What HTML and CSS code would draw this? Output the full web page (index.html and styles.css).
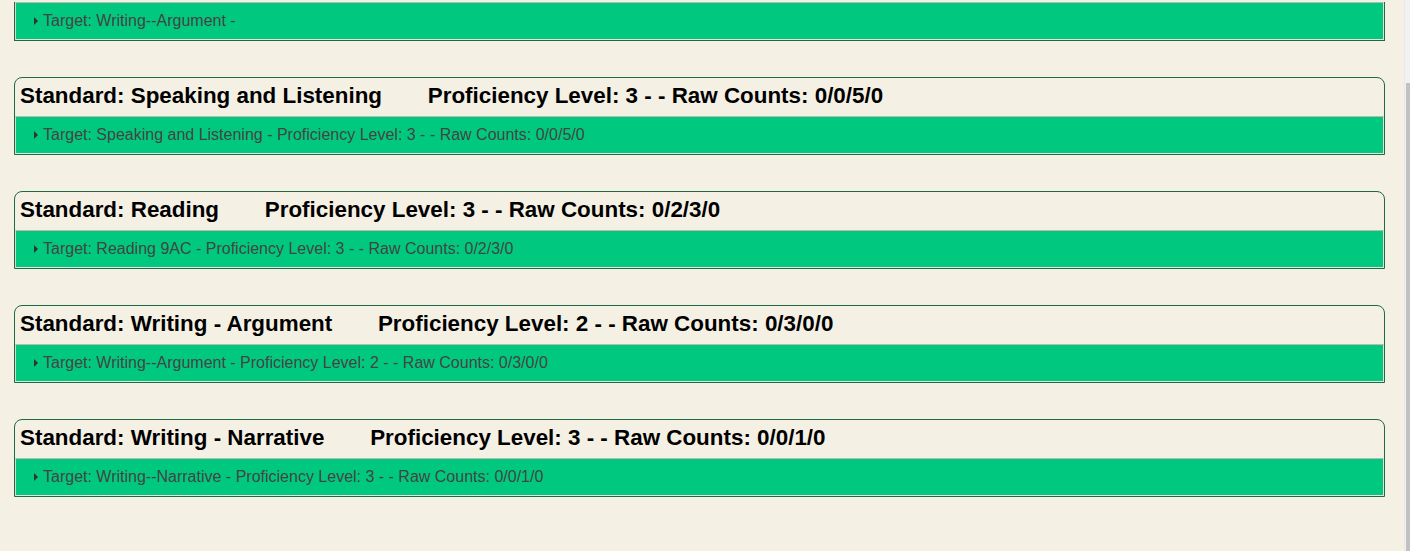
FILE: index.html
```html
<!DOCTYPE html>
<html lang="en">
<head>
<meta charset="utf-8">
<title>Standards Report</title>
<link rel="stylesheet" href="styles.css">
</head>
<body>
<div class="page">
  <div class="card card-first">
    <div class="target"><span class="marker"></span>Target: Writing--Argument -</div>
  </div>
  <div class="card">
    <div class="card-head">Standard: Speaking and Listening <span class="prof">Proficiency Level: 3 - - Raw Counts: 0/0/5/0</span></div>
    <div class="target"><span class="marker"></span>Target: Speaking and Listening - Proficiency Level: 3 - - Raw Counts: 0/0/5/0</div>
  </div>
  <div class="card">
    <div class="card-head">Standard: Reading <span class="prof">Proficiency Level: 3 - - Raw Counts: 0/2/3/0</span></div>
    <div class="target"><span class="marker"></span>Target: Reading 9AC - Proficiency Level: 3 - - Raw Counts: 0/2/3/0</div>
  </div>
  <div class="card">
    <div class="card-head">Standard: Writing - Argument <span class="prof">Proficiency Level: 2 - - Raw Counts: 0/3/0/0</span></div>
    <div class="target"><span class="marker"></span>Target: Writing--Argument - Proficiency Level: 2 - - Raw Counts: 0/3/0/0</div>
  </div>
  <div class="card">
    <div class="card-head">Standard: Writing - Narrative <span class="prof">Proficiency Level: 3 - - Raw Counts: 0/0/1/0</span></div>
    <div class="target"><span class="marker"></span>Target: Writing--Narrative - Proficiency Level: 3 - - Raw Counts: 0/0/1/0</div>
  </div>
</div>
<div class="scrollbar"><div class="thumb"></div></div>
</body>
</html>
```
FILE: styles.css
```css
html, body {
  margin: 0;
  padding: 0;
  background: #f5f0e4;
  overflow: hidden;
}
body {
  font-family: "Liberation Sans", Arial, sans-serif;
  height: 551px;
}
.page {
  display: flex;
  flex-direction: column;
  gap: 36px;
  padding-left: 14px;
  width: 1371px;
}
.card {
  border: 1px solid #1d6a45;
  border-radius: 8px 8px 0 0;
}
.card-first {
  margin-top: 2px;
  border-top: 0;
  border-radius: 0;
}
.card-head {
  height: 38px;
  box-sizing: border-box;
  padding: 5px 0 0 5px;
  font-size: 22.4px;
  font-weight: bold;
  line-height: 26px;
  color: #000;
  white-space: nowrap;
}
.prof {
  margin-left: 39.5px;
}
.target {
  height: 38px;
  box-sizing: border-box;
  background: #00c97f;
  border: 1px solid;
  border-color: #bdb8b0 #e2e2dc #e6e6e0 #d8d6d0;
  padding: 9px 0 0 28px;
  font-size: 16px;
  line-height: 18px;
  color: #444;
  white-space: nowrap;
}
.marker {
  display: inline-block;
  width: 0;
  height: 0;
  border-left: 4px solid #333;
  border-top: 4px solid transparent;
  border-bottom: 4px solid transparent;
  margin: 0 5px 1px -10px;
  vertical-align: middle;
}
.scrollbar {
  position: fixed;
  top: 0;
  right: 0;
  bottom: 0;
  width: 5px;
  background: #f1f1f1;
  border-left: 1px solid #e8e8e8;
}
.thumb {
  margin-top: 83px;
  height: 468px;
  margin-left: 1px;
  background: #c1c1c1;
}
```
